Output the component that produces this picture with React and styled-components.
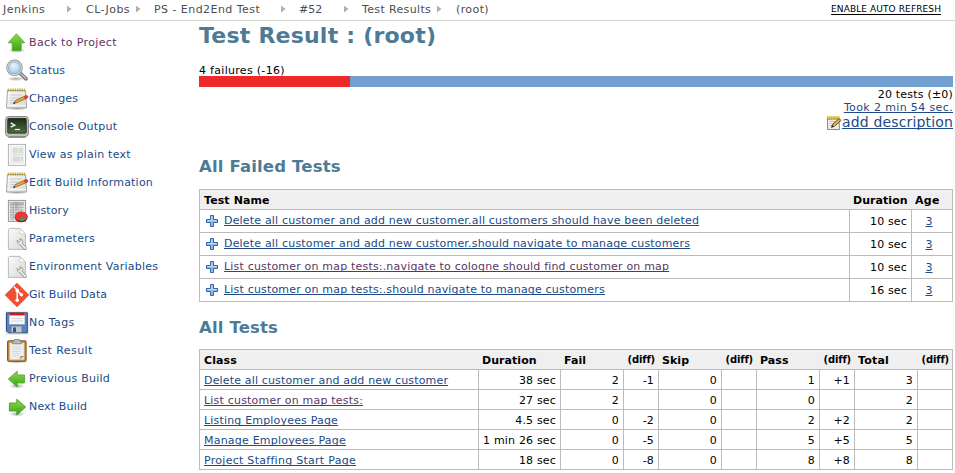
import React from 'react';
import styled, { createGlobalStyle } from 'styled-components';

const Global = createGlobalStyle`
  body { margin: 0; background: #fff; color: #000; overflow: hidden;
    font: 11px/14px "DejaVu Sans", Verdana, sans-serif; }
  * { box-sizing: border-box; }
  h1, h2 { margin: 0; color: #4d7b96; font-weight: 700; white-space: nowrap; }
  svg { display: block; flex: none; }
`;

const Page = styled.div`width: 955px; height: 473px; overflow: hidden;`;
const TopBar = styled.header`
  display: flex; height: 21px; padding: 2px 14px 0 3px;
  border-bottom: 1px solid #d3d7cf; color: #4d4d4d;
`;
const Crumb = styled.span`
  width: ${p => p.$w}px; height: 16px; line-height: 16px; white-space: nowrap; letter-spacing: ${p => p.$ls}px;
`;
const ArrowCell = styled.span`
  width: ${p => p.$w}px; padding-top: 3px;
`;
const Refresh = styled.a`
  margin-left: auto; font-size: 9px; letter-spacing: .1px; color: #000;
  text-decoration: underline; text-underline-offset: 2px; text-decoration-thickness: 1px;
  line-height: 14px; white-space: nowrap;
`;
const Body = styled.div`display: flex;`;
const Side = styled.nav`width: 199px; padding: 9px 0 0 5px; flex: none;`;
const SideItem = styled.a`
  display: flex; align-items: center; height: 28px; padding-bottom: 3px;
  color: ${p => (p.$visited ? '#5c3566' : '#204a87')};
  letter-spacing: ${p => p.$ls}px; white-space: nowrap;
`;
const IconBox = styled.span`width: 24px; height: 24px;`;
const Main = styled.main`width: 754px; flex: none;`;
const Title = styled.h1`
  font-size: 22px; line-height: 28px; padding-top: 1px; letter-spacing: .22px;
`;
const SubTitle = styled.h2`
  font-size: 16.5px; line-height: 20px; letter-spacing: .16px; margin: ${p => p.$m};
`;
const Failures = styled.div`margin-top: 14px; height: 12px; letter-spacing: .3px;`;
const Bar = styled.div`display: flex; height: 11px; background: #729fcf;`;
const BarFail = styled.div`width: 151px; background: #ef2929;`;
const Summary = styled.div`
  display: flex; flex-direction: column; align-items: flex-end; height: 45px;
`;
const Count = styled.div`height: 13px; line-height: 15px; letter-spacing: .2px;`;
const Link = styled.a`
  color: ${p => (p.$visited ? '#5c3566' : '#204a87')};
  text-decoration: underline; text-decoration-skip-ink: none;
  text-decoration-thickness: 1px; text-underline-offset: 1px;
  letter-spacing: ${p => p.$ls || 0}px; white-space: nowrap;
`;
const Took = styled(Link)`height: 13px; line-height: 16px;`;
const Describe = styled.div`
  display: flex; height: 18px; font-size: 14px; line-height: 18px; gap: 0;
  svg { margin-top: 1px; }
`;
const Table = styled.section`
  border: 1px solid #bbb; border-width: 1px 0 0 1px;
`;
const Row = styled.div`
  display: grid; grid-template-columns: ${p => p.$cols}; height: ${p => p.$h}px;
`;
const Cell = styled.div`
  display: flex; align-items: center; padding: ${p => p.$pad || '2px 4px 0'};
  border: 1px solid #bbb; border-width: 0 1px 1px 0; white-space: nowrap;
  justify-content: ${p => p.$align || 'flex-end'}; letter-spacing: ${p => p.$ls ?? 0.15}px;
`;
const HeadCell = styled.div`
  display: flex; align-items: center; padding: 2px 4px 0 3px; background: #efefef;
  border-bottom: 1px solid #bbb; font-weight: 700; white-space: nowrap;
  letter-spacing: ${p => p.$ls ?? 0.05}px;
  &:first-child { padding-left: 4px; }
  &:last-child { border-right: 1px solid #bbb; }
`;
const Diff = styled(HeadCell)`
  font-size: 10px; letter-spacing: -.15px; padding: 0 4px 0 3px; justify-content: flex-end;
  &:last-child { padding-right: 3px; }
`;
const TestName = styled.span`display: flex; align-items: center; gap: 4px;`;

const Arrow = () => (
  <svg width="5" height="8" viewBox="0 0 5 8"><path d="M0 0.5L4.6 4L0 7.5Z" fill="#afafaf" /></svg>
);
const Plus = () => (
  <svg width="16" height="16" viewBox="0 0 16 16">
    <path d="M6.5 2.5h3v4h4v3h-4v4h-3v-4h-4v-3h4z" fill="#8fbce6" stroke="#3465a4" />
    <path d="M7.5 3.5v4h-4M8.5 7.5h4" stroke="#c3dcf2" fill="none" />
  </svg>
);

const Defs = () => (
  <svg width="0" height="0">
    <defs>
      <linearGradient id="green" x1="0" y1="0" x2="0" y2="1"><stop offset="0" stopColor="#8fd85c" /><stop offset="1" stopColor="#36a808" /></linearGradient>
      <linearGradient id="paper" x1="0" y1="0" x2="1" y2="1"><stop offset="0" stopColor="#fafafa" /><stop offset="1" stopColor="#d8dad6" /></linearGradient>
      <linearGradient id="screen" x1="0" y1="0" x2="0" y2="1"><stop offset="0" stopColor="#1c2c18" /><stop offset="1" stopColor="#4d7040" /></linearGradient>
      <radialGradient id="lens" cx=".45" cy=".35" r=".7"><stop offset="0" stopColor="#eaf3fc" /><stop offset="1" stopColor="#94bce8" /></radialGradient>
      <radialGradient id="shade"><stop offset="0" stopColor="#000" stopOpacity=".35" /><stop offset="1" stopColor="#000" stopOpacity="0" /></radialGradient>
    </defs>
  </svg>
);

const Svg = ({ children }) => <svg width="24" height="24" viewBox="0 0 24 24">{children}</svg>;
const ARROW_UP = 'M11.5 2.8L19.8 11.8H16.2V19.4H7.2V11.8H3.2Z';

const Up = () => <Svg><ellipse cx="12" cy="19.6" rx="9" ry="2.4" fill="url(#shade)" /><path d={ARROW_UP} fill="url(#green)" stroke="#5ba63b" strokeWidth=".9" /></Svg>;
const Left = () => (
  <Svg><ellipse cx="12" cy="19" rx="8" ry="2.6" fill="url(#shade)" />
    <path d="M3.3 12L12.2 4.2V8H19.6V16H12.2V20Z" fill="url(#green)" stroke="#5ba63b" strokeWidth=".9" /></Svg>
);
const Right = () => (
  <Svg><ellipse cx="12" cy="19" rx="8" ry="2.6" fill="url(#shade)" />
    <path d="M20.7 12L11.8 4.2V8H4.4V16H11.8V20Z" fill="url(#green)" stroke="#4d9a2d" strokeWidth=".9" /></Svg>
);
const Search = () => (
  <Svg><ellipse cx="11" cy="19.8" rx="9" ry="2.4" fill="url(#shade)" />
    <path d="M14.8 13.8L21 19.8" stroke="#777b7c" strokeWidth="3.8" strokeLinecap="round" />
    <path d="M15 14L20.8 19.4" stroke="#b9bdbd" strokeWidth="1.6" strokeLinecap="round" />
    <circle cx="9.5" cy="8.8" r="7.3" fill="url(#lens)" stroke="#9b9e9c" strokeWidth="2" />
    <circle cx="9.5" cy="8.8" r="6.7" fill="none" stroke="#eff1ef" strokeWidth="1" />
    <circle cx="9.5" cy="8.8" r="5.9" fill="none" stroke="#6f99cd" strokeWidth=".7" />
  </Svg>
);
const Notepad = () => (
  <Svg><ellipse cx="12" cy="21.5" rx="11" ry="1.8" fill="url(#shade)" />
    <path d="M2.5 3.5H20.5L21.6 21H1.5Z" fill="url(#paper)" stroke="#9c9e9a" strokeWidth=".9" />
    <path d="M5 8h12M5 11h12M5 13.5h9M5 16h5" stroke="#c2c4c0" strokeWidth=".8" />
    <path d="M2.2 18.6h19" stroke="#fff" strokeWidth=".8" />
    <path d="M2.7 2.8H20" stroke="#c9b24a" strokeWidth="2.4" strokeDasharray="1.5 .8" />
    <path d="M2.7 4H20" stroke="#867018" strokeWidth=".7" strokeDasharray="1.5 .8" />
    <path d="M8.5 16.5L10.8 13.2L20.5 8.8L22 11.2L12.2 15.6Z" fill="#e3a33e" stroke="#8e5d19" strokeWidth=".7" />
    <path d="M19 9.5L21.5 8.3Q23.8 8.9 22.8 10.8L20.3 12Z" fill="#d34747" stroke="#993333" strokeWidth=".4" />
    <path d="M8 17L9.2 14.8L10.4 16.3Z" fill="#333" />
  </Svg>
);
const Terminal = () => (
  <Svg><rect x=".6" y="1.5" width="22.8" height="20" rx="3" fill="#bfc1bc" stroke="#888a85" />
    <path d="M2.5 21.5H21.5L20 23H4Z" fill="#8f918d" />
    <rect x="2.8" y="3.5" width="18.4" height="14.6" rx=".8" fill="url(#screen)" stroke="#283025" />
    <path d="M5.7 7.8L9.7 10.2L5.7 12.2" fill="none" stroke="#f3f6f1" strokeWidth="1.4" />
    <path d="M9.8 14.5H15" stroke="#f3f6f1" strokeWidth="1.2" />
    <circle cx="16.5" cy="19.8" r=".8" fill="#9ed34c" />
  </Svg>
);
const PlainText = () => (
  <Svg><rect x="3.4" y="1.4" width="17.2" height="21" fill="#eceeec" stroke="#b2b4b0" />
    <path d="M4.5 2.5h15v19h-15z" fill="none" stroke="#fafafa" />
    <path d="M8 5h5v5H8zM14 5h4v5h-4zM8 11h10v1H8zM8 13.5h7v5H8zM16 13.5h2v5h-2z" fill="#d9dbd8" />
  </Svg>
);
const Chart = () => (
  <Svg><rect x="3.4" y="1.4" width="17.2" height="21" fill="#e7e8e6" stroke="#989a96" />
    <path d="M5 3h4v18H5z" fill="#cfd0ce" /><path d="M5 3h14v3H5z" fill="#b9bbb7" />
    <path d="M5 6h14M5 8.5h14M5 11h14M5 13.5h14M5 16h14M5 18.5h14M8.5 3v18M11 3v18M13.5 3v18M16 3v18" stroke="#a5a7a3" strokeWidth=".7" />
    <path d="M10 3h3v8h-3z" fill="#777" opacity=".25" />
    <ellipse cx="16.2" cy="18" rx="6.5" ry="5.2" fill="#a40000" />
    <ellipse cx="16.2" cy="17.3" rx="6.3" ry="4.8" fill="#ed3535" />
    <path d="M16.5 17.5L14.2 22Q17.5 22.8 20 21Z" fill="#56962b" />
    <path d="M16.5 17.5L20 21Q22.3 19.5 21.8 18Z" fill="#477abd" />
  </Svg>
);
const Params = () => (
  <Svg><path d="M4.5 1.4H15L20.4 7V22.4H3.4V2.5Z" fill="url(#paper)" stroke="#b9bbb7" />
    <path d="M15 1.5V7H20.3Z" fill="#fff" stroke="#c5c7c3" strokeWidth=".7" />
    <path d="M20.2 21.2L16 17" stroke="#9a9d98" strokeWidth="3.4" strokeLinecap="round" />
    <path d="M12 13.2L14.2 15L16 12.8L14.3 12Q17.8 11.6 18 14.7Q17.3 18 14.3 17.7Q12 16.8 12 13.2Z" fill="#e7e9e5" stroke="#92958f" strokeWidth=".8" />
    <path d="M20.2 21.2L16 17" stroke="#eff1ed" strokeWidth="1.7" strokeLinecap="round" />
  </Svg>
);
const Git = () => (
  <Svg><path d="M12 .8L23.2 12L12 23.2L.8 12Z" fill="#f05133" stroke="#f05133" strokeWidth="1.6" strokeLinejoin="round" />
    <path d="M9 3.7L12.2 7V17.6M12.2 7.5L16.3 11.6" stroke="#fff" strokeWidth="1.5" fill="none" />
    <circle cx="12.2" cy="7.4" r="1.8" fill="#fff" /><circle cx="12.2" cy="17.3" r="1.8" fill="#fff" /><circle cx="16.4" cy="11.8" r="1.8" fill="#fff" />
  </Svg>
);
const Floppy = () => (
  <Svg><path d="M0 0h24v24H0z" fill="#ececea" />
    <path d="M1.5 1.8h20.8v20H3.3L1.5 20Z" fill="#5a86bd" stroke="#2c4c7c" />
    <path d="M4.3 2.3h15.4v11H4.3z" fill="#f8f8f8" /><path d="M4.3 1.8h15.4V4.4H4.3z" fill="#d91414" />
    <path d="M6 7.5h12M6 10h12" stroke="#d1d3d1" strokeWidth=".9" />
    <path d="M6 15h11v6.6H6z" fill="#c3c7c9" stroke="#547099" strokeWidth=".7" />
    <path d="M8 16.5h3v4.5H8z" fill="#3b5376" />
  </Svg>
);
const Clipboard = () => (
  <Svg><ellipse cx="12" cy="23" rx="11" ry="1.2" fill="url(#shade)" />
    <rect x="2.5" y="1.8" width="18.6" height="20.6" rx="1" fill="#c28431" stroke="#8c5919" />
    <path d="M4.6 3.8h14.6v17H4.6z" fill="#eeefed" stroke="#bbb" strokeWidth=".6" />
    <path d="M7.2 8h9M7.2 10.2h9M7.2 12.4h9M7.2 14.6h7M7.2 16.8h7" stroke="#d6d8d4" />
    <path d="M14.5 20.8L15.5 17H19.2Z" fill="#969894" />
    <path d="M7.5 4.8V3Q8 1.6 9.5 1.6V.4H14.3V1.6Q16 1.6 16.3 3V4.8Z" fill="#b9bbb7" stroke="#777974" strokeWidth=".8" />
  </Svg>
);
const SmallNote = () => (
  <svg width="16" height="18" viewBox="0 0 16 18">
    <path d="M1.5 4h11.3l.7 11.5H1.5z" fill="#eeeeec" stroke="#888a85" />
    <path d="M3.5 7.5h6M3.5 9.5h5M3.5 11.5h3" stroke="#b8bab6" strokeWidth=".8" />
    <path d="M1 3.5h12.5" stroke="#f0c51e" strokeWidth="3" strokeDasharray="1.6 .4" />
    <path d="M1 5.2h12.5" stroke="#5f4d08" strokeWidth=".7" strokeDasharray="1.6 .4" />
    <path d="M5.5 13.2L7 10L13.2 4.6L15 6.5L8.5 12.2Z" fill="#eebd4a" stroke="#4a3a13" strokeWidth=".9" />
    <path d="M12.3 5.5L13.3 4.5L15.1 6.4L14 7.3Z" fill="#8d8e85" />
    <path d="M5.2 13.6L6.2 11.5L7.5 12.8Z" fill="#111" />
  </svg>
);

const crumbs = [
  ['Jenkins', 64, 0.45, 19], ['CL-Jobs', 50, 0.45, 18], ['PS - End2End Test', 127, 0.45, 18],
  ['#52', 45, 0, 18], ['Test Results', 75, 0.36, 19], ['(root)', 40, 0.4, 0],
];
const menu = [
  ['Back to Project', Up, 0.37, true], ['Status', Search, 0.2], ['Changes', Notepad, 0.2],
  ['Console Output', Terminal, 0.2], ['View as plain text', PlainText, 0.23],
  ['Edit Build Information', Notepad, 0.2], ['History', Chart, 0.1], ['Parameters', Params, 0.32],
  ['Environment Variables', Params, 0.25], ['Git Build Data', Git, 0.1], ['No Tags', Floppy, 0.42],
  ['Test Result', Clipboard, 0.42], ['Previous Build', Left, 0.25], ['Next Build', Right, 0.15],
];
const failed = [
  ['Delete all customer and add new customer.all customers should have been deleted', '10 sec'],
  ['Delete all customer and add new customer.should navigate to manage customers', '10 sec'],
  ['List customer on map tests:.navigate to cologne should find customer on map', '10 sec', true],
  ['List customer on map tests:.should navigate to manage customers', '16 sec'],
];
const classes = [
  ['Delete all customer and add new customer', 0.16, '38 sec', ['2', '-1', '0', '', '1', '+1', '3', '']],
  ['List customer on map tests:', 0.2, '27 sec', ['2', '', '0', '', '0', '', '2', ''], true],
  ['Listing Employees Page', 0.18, '4.5 sec', ['0', '-2', '0', '', '2', '+2', '2', '']],
  ['Manage Employees Page', 0.21, '1 min 26 sec', ['0', '-5', '0', '', '5', '+5', '5', '']],
  ['Project Staffing Start Page', 0.28, '18 sec', ['0', '-8', '0', '', '8', '+8', '8', '']],
];
const FAILED_COLS = '650px 62px 41px';
const CLASS_COLS = '279px 82px repeat(4, 63px 35px)';

export default function App() {
  return (
    <Page>
      <Global />
      <TopBar>
        {crumbs.map(([t, w, ls, a]) => (
          <React.Fragment key={t}>
            <Crumb $w={w} $ls={ls}>{t}</Crumb>
            {a > 0 && <ArrowCell $w={a}><Arrow /></ArrowCell>}
          </React.Fragment>
        ))}
        <Refresh>ENABLE AUTO REFRESH</Refresh>
      </TopBar>
      <Body>
        <Side>
          {menu.map(([t, Icon, ls, v]) => (
            <SideItem key={t} $ls={ls} $visited={v}><IconBox><Icon /></IconBox>{t}</SideItem>
          ))}
        </Side>
        <Main>
          <Title>Test Result : (root)</Title>
          <Failures>4 failures (-16)</Failures>
          <Bar><BarFail /></Bar>
          <Summary>
            <Count>20 tests (±0)</Count>
            <Took $ls={0.37}>Took 2 min 54 sec.</Took>
            <Describe><SmallNote /><Link $ls={0.16}>add description</Link></Describe>
          </Summary>
          <SubTitle $m="25px 0 12px">All Failed Tests</SubTitle>
          <Table>
            <Row $cols={FAILED_COLS} $h={20}>
              <HeadCell $ls={0.1}>Test Name</HeadCell><HeadCell>Duration</HeadCell><HeadCell $ls={0.3}>Age</HeadCell>
            </Row>
            {failed.map(([t, d, v]) => (
              <Row key={t} $cols={FAILED_COLS} $h={23}>
                <Cell $align="flex-start" $pad="0 4px">
                  <TestName><Plus /><Link $ls={0.184} $visited={v}>{t}</Link></TestName>
                </Cell>
                <Cell $pad="1px 4px 0">{d}</Cell>
                <Cell $align="center" $pad="1px 6px 0 0"><Link>3</Link></Cell>
              </Row>
            ))}
          </Table>
          <SubTitle $m="16px 0 11px">All Tests</SubTitle>
          <Table>
            <Row $cols={CLASS_COLS} $h={20}>
              <HeadCell $ls={0.1}>Class</HeadCell><HeadCell>Duration</HeadCell>
              <HeadCell>Fail</HeadCell><Diff>(diff)</Diff>
              <HeadCell>Skip</HeadCell><Diff>(diff)</Diff>
              <HeadCell>Pass</HeadCell><Diff>(diff)</Diff>
              <HeadCell $ls={0.2}>Total</HeadCell><Diff>(diff)</Diff>
            </Row>
            {classes.map(([t, ls, d, cells, v]) => (
              <Row key={t} $cols={CLASS_COLS} $h={20}>
                <Cell $align="flex-start"><Link $ls={ls} $visited={v}>{t}</Link></Cell>
                <Cell $ls={0.18}>{d}</Cell>
                {cells.map((c, i) => <Cell key={i}>{c}</Cell>)}
              </Row>
            ))}
          </Table>
        </Main>
      </Body>
      <Defs />
    </Page>
  );
}
